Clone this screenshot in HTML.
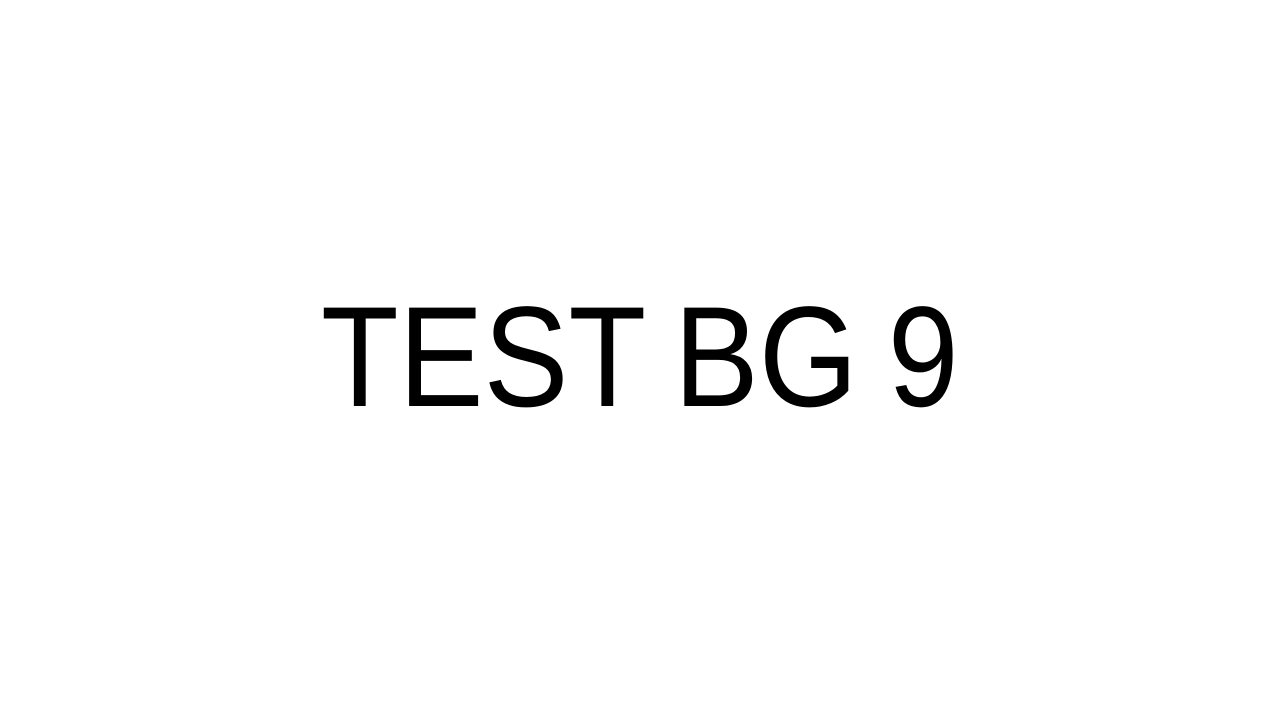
<!DOCTYPE html>
<html>
<head>
<meta charset="utf-8">
<style>
  html,body{margin:0;padding:0;background:#fff;width:1280px;height:720px;overflow:hidden;}
  .t{position:absolute;left:0;top:276px;width:1280px;text-align:center;
     font-family:"Liberation Sans",Arial,sans-serif;font-size:143px;line-height:normal;
     color:#000;white-space:nowrap;word-spacing:-6px;transform:scaleX(0.89);transform-origin:638px 0;}
</style>
</head>
<body>
<div class="t">TEST BG 9</div>
</body>
</html>
